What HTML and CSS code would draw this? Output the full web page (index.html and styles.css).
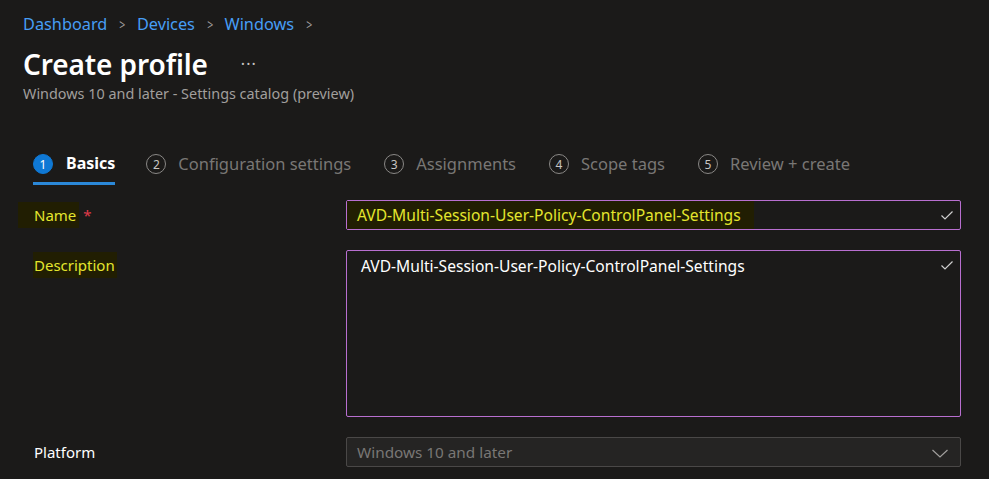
FILE: index.html
```html
<!DOCTYPE html>
<html lang="en">
<head>
<meta charset="utf-8">
<title>Create profile</title>
<link rel="stylesheet" href="styles.css">
</head>
<body>
<div class="page">
  <nav class="crumbs">
    <a class="crumb">Dashboard</a><span class="sep">&gt;</span>
    <a class="crumb">Devices</a><span class="sep">&gt;</span>
    <a class="crumb">Windows</a><span class="sep">&gt;</span>
  </nav>
  <div class="title-row">
    <h1 class="title">Create profile</h1>
    <span class="more">···</span>
  </div>
  <div class="subtitle">Windows 10 and later - Settings catalog (preview)</div>

  <div class="steps">
    <div class="step active"><span class="num">1</span><span class="label">Basics</span></div>
    <div class="step"><span class="num">2</span><span class="label">Configuration settings</span></div>
    <div class="step"><span class="num">3</span><span class="label">Assignments</span></div>
    <div class="step"><span class="num">4</span><span class="label">Scope tags</span></div>
    <div class="step"><span class="num">5</span><span class="label">Review + create</span></div>
  </div>

  <div class="form">
    <div class="flabel"><span class="hl hl-name">Name</span><span class="req">*</span></div>
    <div class="field input">
      <span class="hl-val">AVD-Multi-Session-User-Policy-ControlPanel-Settings</span>
      <svg class="check" width="16" height="16" viewBox="0 0 16 16"><path d="M2.5 8.5 L6 12 L13.5 4.5" fill="none" stroke="#d0d0d0" stroke-width="1.2"/></svg>
    </div>

    <div class="flabel top"><span class="hl hl-desc">Description</span></div>
    <div class="field textarea">
      <span class="val">AVD-Multi-Session-User-Policy-ControlPanel-Settings</span>
      <svg class="check" width="16" height="16" viewBox="0 0 16 16"><path d="M2.5 8.5 L6 12 L13.5 4.5" fill="none" stroke="#d0d0d0" stroke-width="1.2"/></svg>
    </div>

    <div class="flabel plain">Platform</div>
    <div class="field select">
      <span class="sval">Windows 10 and later</span>
      <svg class="chev" width="18" height="12" viewBox="0 0 18 12"><path d="M1.5 3 L9 10 L16.5 3" fill="none" stroke="#a19f9d" stroke-width="1.2"/></svg>
    </div>
  </div>
</div>
</body>
</html>
```
FILE: styles.css
```css
html, body {
  margin: 0;
  padding: 0;
  background: #1b1a19;
  height: 100%;
  overflow: hidden;
}
body {
  font-family: "Noto Sans", "Open Sans", sans-serif;
  color: #ffffff;
}
.page {
  padding: 11px 29px 0 23px;
}
.crumbs {
  display: flex;
  align-items: center;
  height: 26px;
  font-size: 16.3px;
}
.crumb {
  color: #479ef5;
}
.sep {
  color: #a19f9d;
  margin: 0 10px 0 11px;
  font-size: 15px;
  transform: scaleX(0.7);
  display: inline-block;
}
.title-row {
  display: flex;
  align-items: center;
  margin-top: 10px;
  height: 34px;
}
.title {
  margin: 0;
  font-size: 28px;
  font-weight: 600;
  letter-spacing: -0.1px;
}
.more {
  margin-left: 33px;
  font-size: 16px;
  color: #c8c6c4;
  letter-spacing: 1px;
}
.subtitle {
  margin-top: 3px;
  font-size: 14.4px;
  color: #a19f9d;
}
.steps {
  display: flex;
  margin-top: 50px;
  margin-left: 10px;
  height: 32px;
}
.step {
  display: flex;
  align-items: flex-start;
  margin-right: 33px;
  height: 32px;
  box-sizing: border-box;
}
.step .num {
  width: 18px;
  height: 18px;
  border: 1.5px solid #8a8886;
  border-radius: 50%;
  display: flex;
  align-items: center;
  justify-content: center;
  font-size: 12px;
  color: #c8c6c4;
  margin-top: 1px;
}
.step .label {
  margin-left: 12px;
  font-size: 16.5px;
  color: #797775;
  line-height: 21px;
}
.step.active {
  border-bottom: 3px solid #2b88d8;
  margin-right: 31px;
}
.step.active .num {
  background: #0f78d4;
  border-color: #0f78d4;
  color: #ffffff;
}
.step.active .label {
  color: #ffffff;
  font-weight: 700;
  font-size: 16px;
  margin-left: 13px;
}
.form {
  display: grid;
  grid-template-columns: 328px 615px;
  row-gap: 20px;
  margin-top: 15px;
  margin-left: -5px;
}
.flabel {
  font-size: 15px;
  display: flex;
  align-items: center;
  height: 30px;
}
.flabel.top {
  align-items: flex-start;
  height: auto;
  padding-top: 2px;
}
.hl {
  background: #211e02;
  color: #e4e62e;
  line-height: 26px;
}
.hl-name {
  padding: 0 3px 0 16px;
}
.hl-desc {
  margin-left: 15px;
  padding: 0 2px 0 1px;
}
.req {
  color: #e03a4a;
  margin-left: 4px;
  font-size: 15px;
}
.flabel.plain {
  padding-left: 16px;
  color: #ffffff;
}
.field {
  box-sizing: border-box;
  border: 1px solid #b86fd0;
  border-radius: 2px;
  position: relative;
  font-size: 15.6px;
}
.input {
  height: 30px;
  display: flex;
  align-items: center;
}
.hl-val {
  background: #211e02;
  color: #e4e62e;
  align-self: stretch;
  display: flex;
  align-items: center;
  padding: 0 13px 0 10px;
}
.check {
  position: absolute;
  right: 5px;
  top: 6px;
}
.textarea {
  height: 167px;
  padding: 4px 0 0 14px;
}
.val {
  color: #ffffff;
}
.select {
  height: 30px;
  background: #252423;
  border-color: #4a4847;
  display: flex;
  align-items: center;
  padding-left: 10px;
  font-size: 15.3px;
}
.sval {
  color: #797775;
}
.chev {
  position: absolute;
  right: 11px;
  top: 9px;
}
```
